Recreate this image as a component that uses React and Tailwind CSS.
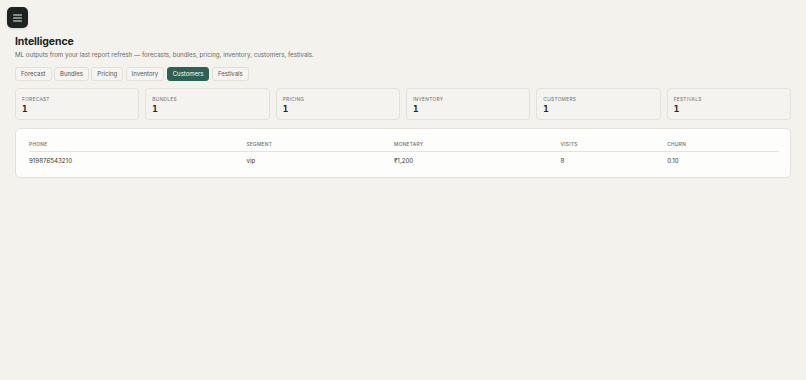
import React, { useState } from 'react';

const tabs = ['Forecast', 'Bundles', 'Pricing', 'Inventory', 'Customers', 'Festivals'];

const stats = [
  { label: 'Forecast', value: 1 },
  { label: 'Bundles', value: 1 },
  { label: 'Pricing', value: 1 },
  { label: 'Inventory', value: 1 },
  { label: 'Customers', value: 1 },
  { label: 'Festivals', value: 1 },
];

const columns = [
  { key: 'phone', label: 'Phone', width: 'w-[218px]' },
  { key: 'segment', label: 'Segment', width: 'w-[148px]' },
  { key: 'monetary', label: 'Monetary', width: 'w-[167px]' },
  { key: 'visits', label: 'Visits', width: 'w-[107px]' },
  { key: 'churn', label: 'Churn', width: 'w-[112px]' },
];

const rows = [
  { phone: '919876543210', segment: 'vip', monetary: '₹1,200', visits: '8', churn: '0.10' },
];

const MenuButton = () => (
  <button
    type="button"
    className="flex h-[21px] w-[21px] items-center justify-center rounded-[5px] bg-[#1d2320] shadow-sm"
  >
    <svg width="9" height="8" viewBox="0 0 9 8" fill="none">
      <path d="M0.5 1h8M0.5 4h8M0.5 7h8" stroke="#f3f1ec" strokeWidth="1.1" strokeLinecap="round" />
    </svg>
  </button>
);

export default function App() {
  const [active, setActive] = useState('Customers');

  return (
    <div
      className="min-h-[380px] w-full bg-[#f4f2ed] text-[#1e1f1c]"
      style={{ fontFamily: 'Inter, "Noto Sans", sans-serif' }}
    >
      <div className="px-[7px] pt-[7px]">
        <MenuButton />
      </div>

      <main className="px-[15px] pt-[7px]">
        <h1 className="text-[10.5px] font-bold leading-[14px] tracking-[-0.1px]">Intelligence</h1>
        <p className="mt-[1px] text-[6.2px] leading-[9px] text-[#6a6a64]">
          ML outputs from your last report refresh — forecasts, bundles, pricing, inventory, customers, festivals.
        </p>

        <div className="mt-[8px] flex gap-[2.5px]">
          {tabs.map((t) => (
            <button
              key={t}
              type="button"
              onClick={() => setActive(t)}
              className={
                t === active
                  ? 'h-[13.5px] rounded-[3px] border border-[#2b6253] bg-[#2b6253] px-[5px] text-[6px] leading-none text-white'
                  : 'h-[13.5px] rounded-[3px] border border-[#e2dfd8] bg-[#f6f4f0] px-[5px] text-[6px] leading-none text-[#55554f]'
              }
            >
              {t}
            </button>
          ))}
        </div>

        <div className="mt-[7px] grid grid-cols-6 gap-[6px]">
          {stats.map((s) => (
            <div
              key={s.label}
              className="h-[32px] rounded-[4px] border border-[#e4e1da] bg-[#f5f3ef] px-[6px] pt-[7px]"
            >
              <div className="text-[4.8px] uppercase leading-[6px] tracking-[0.3px] text-[#6e6e68]">
                {s.label}
              </div>
              <div
                className="mt-[2px] text-[9px] font-bold leading-[11px] text-[#262622]"
                style={{ fontFamily: '"DejaVu Sans Mono", monospace' }}
              >
                {s.value}
              </div>
            </div>
          ))}
        </div>

        <div className="mt-[8px] rounded-[5px] border border-[#e4e1da] bg-[#fdfdfb] pb-[12px] pl-[13px] pr-[11px] pt-[12px]">
          <table className="w-full border-collapse text-left">
            <thead>
              <tr className="border-b border-[#e6e3dd]">
                {columns.map((c) => (
                  <th
                    key={c.key}
                    className={`${c.width} pb-[4px] text-[4.8px] font-medium uppercase leading-[6px] tracking-[0.3px] text-[#6e6e68]`}
                  >
                    {c.label}
                  </th>
                ))}
              </tr>
            </thead>
            <tbody>
              {rows.map((r) => (
                <tr key={r.phone}>
                  {columns.map((c) => (
                    <td key={c.key} className="pt-[5px] text-[6.2px] leading-[8px] text-[#3a3a36]">
                      {r[c.key]}
                    </td>
                  ))}
                </tr>
              ))}
            </tbody>
          </table>
        </div>
      </main>
    </div>
  );
}
